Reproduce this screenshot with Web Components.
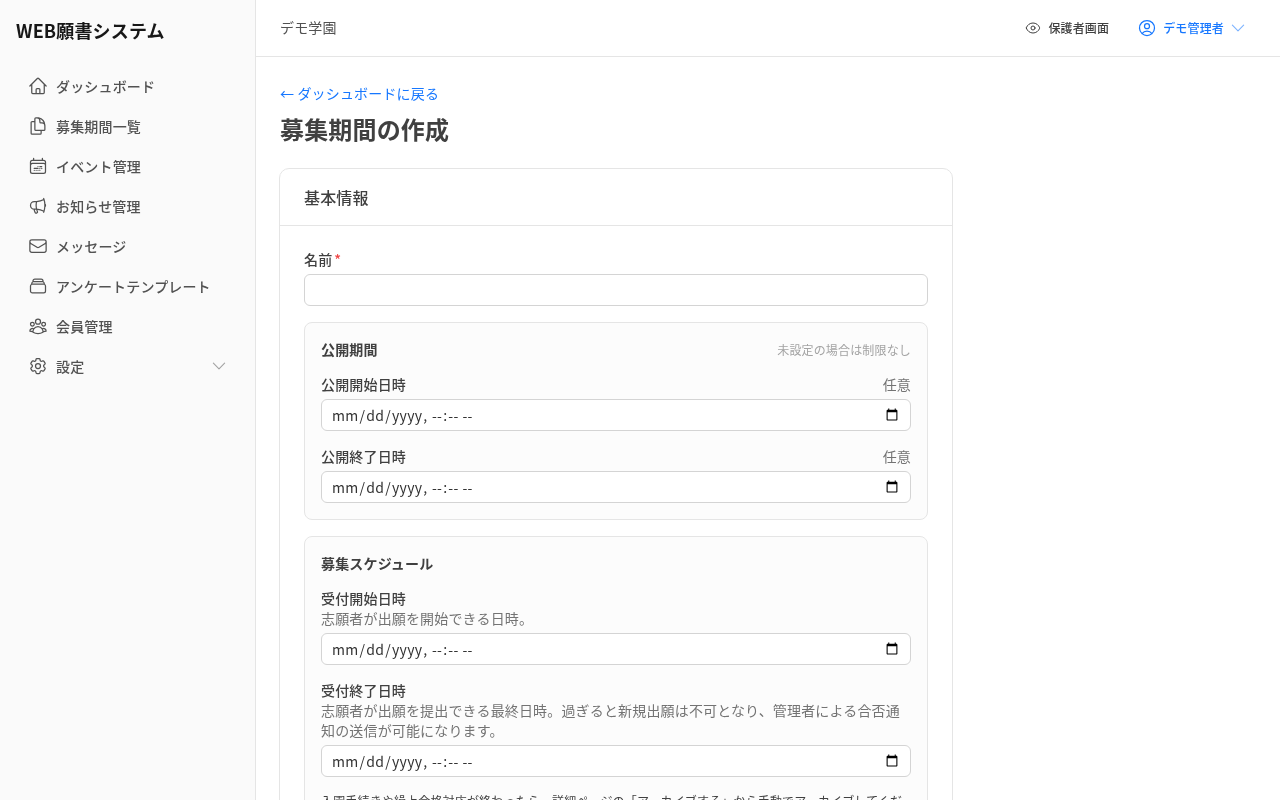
<!DOCTYPE html>
<html lang="ja">
<head>
<meta charset="utf-8">
<title>募集期間の作成</title>
<style>
  html, body {
    margin: 0;
    height: 100%;
    overflow: hidden;
    background: #ffffff;
    font-family: "Noto Sans CJK JP", "Noto Sans", sans-serif;
    letter-spacing: 0.01em;
    color: #404040;
  }
</style>
</head>
<body>

<app-shell>
  <side-nav slot="side" title="WEB願書システム">
    <nav-item icon="home">ダッシュボード</nav-item>
    <nav-item icon="files">募集期間一覧</nav-item>
    <nav-item icon="event">イベント管理</nav-item>
    <nav-item icon="megaphone">お知らせ管理</nav-item>
    <nav-item icon="mail">メッセージ</nav-item>
    <nav-item icon="template">アンケートテンプレート</nav-item>
    <nav-item icon="team">会員管理</nav-item>
    <nav-item icon="gear" expandable>設定</nav-item>
  </side-nav>
  <top-bar slot="top" school="デモ学園" guardian="保護者画面" user="デモ管理者"></top-bar>

  <page-title back="ダッシュボードに戻る">募集期間の作成</page-title>
  <form-card heading="基本情報">
    <text-field label="名前" required></text-field>
    <field-panel heading="公開期間" hint="未設定の場合は制限なし">
      <date-field label="公開開始日時" optional></date-field>
      <date-field label="公開終了日時" optional></date-field>
    </field-panel>
    <field-panel heading="募集スケジュール">
      <date-field label="受付開始日時" help="志願者が出願を開始できる日時。"></date-field>
      <date-field label="受付終了日時" help="志願者が出願を提出できる最終日時。過ぎると新規出願は不可となり、管理者による合否通知の送信が可能になります。"></date-field>
      <panel-note>入園手続きや繰上合格対応が終わったら、詳細ページの「アーカイブする」から手動でアーカイブしてください。</panel-note>
    </field-panel>
  </form-card>
</app-shell>

<script>
(function() {
  // Outline icons, all on a 24 unit grid
  const ICONS = {
    home: 'm2.25 12 8.954-8.955c.44-.439 1.152-.439 1.591 0L21.75 12M4.5 9.75v10.125c0 .621.504 1.125 1.125 1.125H9.75v-4.875c0-.621.504-1.125 1.125-1.125h2.25c.621 0 1.125.504 1.125 1.125V21h4.125c.621 0 1.125-.504 1.125-1.125V9.75M8.25 21h8.25',
    files: 'M15.75 17.25v3.375c0 .621-.504 1.125-1.125 1.125h-9.75a1.125 1.125 0 0 1-1.125-1.125V7.875c0-.621.504-1.125 1.125-1.125H6.75a9.06 9.06 0 0 1 1.5.124m7.5 10.376h3.375c.621 0 1.125-.504 1.125-1.125V11.25c0-4.46-3.243-8.161-7.5-8.876a9.06 9.06 0 0 0-1.5-.124H9.375c-.621 0-1.125.504-1.125 1.125v3.5m7.5 10.375H9.375a1.125 1.125 0 0 1-1.125-1.125v-9.25m12 6.625v-1.875a3.375 3.375 0 0 0-3.375-3.375h-1.5a1.125 1.125 0 0 1-1.125-1.125v-1.5a3.375 3.375 0 0 0-3.375-3.375H9.75',
    event: 'M6.75 2.994v2.25m10.5-2.25v2.25m-14.252 13.5V7.491a2.25 2.25 0 0 1 2.25-2.25h13.5a2.25 2.25 0 0 1 2.25 2.25v11.251m-18 0a2.25 2.25 0 0 0 2.25 2.25h13.5a2.25 2.25 0 0 0 2.25-2.25m-18 0v-7.5a2.25 2.25 0 0 1 2.25-2.25h13.5a2.25 2.25 0 0 1 2.25 2.25v7.5m-6.75-6h2.25m-9 2.25h4.5m.002-2.25h.005v.006H12v-.006Zm-.001 4.5h.006v.006h-.006v-.005Zm-2.25.001h.005v.006H9.75v-.006Zm-2.25 0h.005v.005h-.006v-.005Zm6.75-2.247h.005v.005h-.005v-.005Zm0 2.247h.006v.006h-.006v-.006Zm2.25-2.248h.006V15H16.5v-.005Z',
    megaphone: 'M10.34 15.84c-.688-.06-1.386-.09-2.09-.09H7.5a4.5 4.5 0 1 1 0-9h.75c.704 0 1.402-.03 2.09-.09m0 9.18c.253.962.584 1.892.985 2.783.247.55.06 1.21-.463 1.511l-.657.38c-.551.318-1.26.117-1.527-.461a20.845 20.845 0 0 1-1.44-4.282m3.102.069a18.03 18.03 0 0 1-.59-4.59c0-1.586.205-3.124.59-4.59m0 9.18a23.848 23.848 0 0 1 8.835 2.535M10.34 6.66a23.847 23.847 0 0 0 8.835-2.535m0 0A23.74 23.74 0 0 0 18.795 3m.38 1.125a23.91 23.91 0 0 1 1.014 5.395m-1.014 8.855c-.118.38-.245.754-.38 1.125m.38-1.125a23.91 23.91 0 0 0 1.014-5.395m0-3.46c.495.413.811 1.035.811 1.73 0 .695-.316 1.317-.811 1.73m0-3.46a24.347 24.347 0 0 1 0 3.46',
    mail: 'M21.75 6.75v10.5a2.25 2.25 0 0 1-2.25 2.25h-15a2.25 2.25 0 0 1-2.25-2.25V6.75m19.5 0A2.25 2.25 0 0 0 19.5 4.5h-15a2.25 2.25 0 0 0-2.25 2.25m19.5 0v.243a2.25 2.25 0 0 1-1.07 1.916l-7.5 4.615a2.25 2.25 0 0 1-2.36 0L3.32 8.91a2.25 2.25 0 0 1-1.07-1.916V6.75',
    template: 'M6 6.878V6a2.25 2.25 0 0 1 2.25-2.25h7.5A2.25 2.25 0 0 1 18 6v.878m-12 0c.235-.083.487-.128.75-.128h10.5c.263 0 .515.045.75.128m-12 0A2.25 2.25 0 0 0 4.5 9v.878m13.5-3A2.25 2.25 0 0 1 19.5 9v.878m0 0a2.246 2.246 0 0 0-.75-.128H5.25c-.263 0-.515.045-.75.128m15 0A2.25 2.25 0 0 1 21 12v6a2.25 2.25 0 0 1-2.25 2.25H5.25A2.25 2.25 0 0 1 3 18v-6c0-.98.626-1.813 1.5-2.122',
    team: 'M18 18.72a9.094 9.094 0 0 0 3.741-.479 3 3 0 0 0-4.682-2.72m.94 3.198.001.031c0 .225-.012.447-.037.666A11.944 11.944 0 0 1 12 21c-2.17 0-4.207-.576-5.963-1.584A6.062 6.062 0 0 1 6 18.719m12 0a5.971 5.971 0 0 0-.941-3.197m0 0A5.995 5.995 0 0 0 12 12.75a5.995 5.995 0 0 0-5.058 2.772m0 0a3 3 0 0 0-4.681 2.72 8.986 8.986 0 0 0 3.74.477m.94-3.197a5.971 5.971 0 0 0-.94 3.197M15 6.75a3 3 0 1 1-6 0 3 3 0 0 1 6 0Zm6 3a2.25 2.25 0 1 1-4.5 0 2.25 2.25 0 0 1 4.5 0Zm-13.5 0a2.25 2.25 0 1 1-4.5 0 2.25 2.25 0 0 1 4.5 0Z',
    gear: 'M9.594 3.94c.09-.542.56-.94 1.11-.94h2.593c.55 0 1.02.398 1.11.94l.213 1.281c.063.374.313.686.645.87.074.04.147.083.22.127.325.196.72.257 1.075.124l1.217-.456a1.125 1.125 0 0 1 1.37.49l1.296 2.247a1.125 1.125 0 0 1-.26 1.431l-1.003.827c-.293.241-.438.613-.43.992a7.723 7.723 0 0 1 0 .255c-.008.378.137.75.43.991l1.004.827c.424.35.534.955.26 1.43l-1.298 2.247a1.125 1.125 0 0 1-1.369.491l-1.217-.456c-.355-.133-.75-.072-1.076.124a6.47 6.47 0 0 1-.22.128c-.331.183-.581.495-.644.869l-.213 1.281c-.09.543-.56.94-1.11.94h-2.594c-.55 0-1.019-.398-1.11-.94l-.213-1.281c-.062-.374-.312-.686-.644-.87a6.52 6.52 0 0 1-.22-.127c-.325-.196-.72-.257-1.076-.124l-1.217.456a1.125 1.125 0 0 1-1.369-.49l-1.297-2.247a1.125 1.125 0 0 1 .26-1.431l1.004-.827c.292-.24.437-.613.43-.991a6.932 6.932 0 0 1 0-.255c.007-.38-.138-.751-.43-.992l-1.004-.827a1.125 1.125 0 0 1-.26-1.43l1.297-2.247a1.125 1.125 0 0 1 1.37-.491l1.216.456c.356.133.751.072 1.076-.124.072-.044.146-.086.22-.128.332-.183.582-.495.644-.869l.214-1.28ZM15 12a3 3 0 1 1-6 0 3 3 0 0 1 6 0Z',
    eye: 'M2.036 12.322a1.012 1.012 0 0 1 0-.639C3.423 7.51 7.36 4.5 12 4.5c4.638 0 8.573 3.007 9.963 7.178.07.207.07.431 0 .639C20.577 16.49 16.64 19.5 12 19.5c-4.638 0-8.573-3.007-9.963-7.178ZM15 12a3 3 0 1 1-6 0 3 3 0 0 1 6 0Z',
    user: 'M17.982 18.725A7.488 7.488 0 0 0 12 15.75a7.488 7.488 0 0 0-5.982 2.975m11.963 0a9 9 0 1 0-11.963 0m11.963 0A8.966 8.966 0 0 1 12 21a8.966 8.966 0 0 1-5.982-2.275M15 9.75a3 3 0 1 1-6 0 3 3 0 0 1 6 0Z',
    chevron: 'm19.5 8.25-7.5 7.5-7.5-7.5'
  };

  function iconSvg(name, size) {
    return `<svg xmlns="http://www.w3.org/2000/svg" width="${size}" height="${size}" viewBox="0 0 24 24" fill="none" stroke="currentColor" stroke-width="1.5" stroke-linecap="round" stroke-linejoin="round" aria-hidden="true"><path d="${ICONS[name]}"/></svg>`;
  }

  // Base class: fills an open shadow root from a markup string
  class ShadowElement extends HTMLElement {
    constructor() {
      super();
      this.attachShadow({mode: 'open'});
    }
    render(html) {
      this.shadowRoot.innerHTML = html;
    }
  }

  class AppShell extends ShadowElement {
    connectedCallback() {
      this.render(`
        <style>
          /* own layer without a known opaque background: text gets grey antialiasing as in the design */
          :host { display: grid; grid-template-columns: 256px 1fr; grid-template-rows: 57px 1fr; height: 100vh; overflow: hidden; will-change: transform; }
          .side { grid-row: 1 / 3; display: block; min-height: 0; }
          .main { padding: 24px 24px 24px 23px; overflow-y: auto; scrollbar-width: none; min-height: 0; }
        </style>
        <div class="side"><slot name="side"></slot></div>
        <slot name="top"></slot>
        <div class="main"><slot></slot></div>`);
    }
  }

  class SideNav extends ShadowElement {
    connectedCallback() {
      this.render(`
        <style>
          :host { display: flex; flex-direction: column; height: 100%; box-sizing: border-box; background: #fafafa; border-right: 1px solid #e5e5e5; }
          .brand { padding: 15px 16px 0; font-size: 18px; font-weight: 700; line-height: 30px; color: #171717; }
          nav { display: flex; flex-direction: column; padding: 21px 16px 0; }
        </style>
        <div class="brand">${this.getAttribute('title')}</div>
        <nav><slot></slot></nav>`);
    }
  }

  class NavItem extends ShadowElement {
    connectedCallback() {
      const chevron = this.hasAttribute('expandable')
        ? `<span class="chevron">${iconSvg('chevron', 18)}</span>` : '';
      this.render(`
        <style>
          :host { display: flex; align-items: center; gap: 8px; height: 40px; padding: 0 11px 0 12px; font-size: 14px; font-weight: 500; color: #525252; }
          .icon { display: flex; flex: none; color: #525252; }
          .label { flex: 1; padding-bottom: 1px; }
          .chevron { display: flex; color: #a3a3a3; }
        </style>
        <span class="icon">${iconSvg(this.getAttribute('icon'), 20)}</span>
        <span class="label"><slot></slot></span>
        ${chevron}`);
    }
  }

  class TopBar extends ShadowElement {
    connectedCallback() {
      this.render(`
        <style>
          :host { display: flex; align-items: center; justify-content: space-between; box-sizing: border-box; height: 57px; padding: 0 33px 0 24px; background: #fff; border-bottom: 1px solid #e5e5e5; }
          .school { padding-bottom: 2px; font-size: 14px; color: #525252; }
          .actions { display: flex; align-items: center; gap: 28px; font-size: 12px; }
          .action { display: flex; align-items: center; gap: 7px; color: #404040; font-weight: 500; }
          .action span { padding-bottom: 2px; }
          .user { gap: 6px; color: #1677ff; }
          .action .chevron { display: flex; padding: 0; margin-left: -1px; color: #7db3ff; }
        </style>
        <div class="school">${this.getAttribute('school')}</div>
        <div class="actions">
          <div class="action">${iconSvg('eye', 16)}<span>${this.getAttribute('guardian')}</span></div>
          <div class="action user">${iconSvg('user', 20)}<span>${this.getAttribute('user')}</span>
            <span class="chevron">${iconSvg('chevron', 18)}</span></div>
        </div>`);
    }
  }

  class PageTitle extends ShadowElement {
    connectedCallback() {
      this.render(`
        <style>
          :host { display: block; margin: 0 0 21px 1px; }
          a { display: block; font-size: 14px; line-height: 25px; color: #1677ff; text-decoration: none; }
          h1 { margin: 5px 0 0; font-size: 24px; font-weight: 700; line-height: 36px; color: #404040; }
        </style>
        <a href="#">← ${this.getAttribute('back')}</a>
        <h1><slot></slot></h1>`);
    }
  }

  class FormCard extends ShadowElement {
    connectedCallback() {
      this.render(`
        <style>
          :host { display: block; box-sizing: border-box; width: 674px; background: #fff; border: 1px solid #e5e5e5; border-radius: 10px; }
          header { padding: 16px 24px; font-size: 16px; font-weight: 500; line-height: 24px; color: #404040; border-bottom: 1px solid #e5e5e5; }
          .body { display: flex; flex-direction: column; gap: 16px; padding: 24px; }
        </style>
        <header>${this.getAttribute('heading')}</header>
        <div class="body"><slot></slot></div>`);
    }
  }

  class TextField extends ShadowElement {
    connectedCallback() {
      const star = this.hasAttribute('required') ? '<span class="star">*</span>' : '';
      this.render(`
        <style>
          :host { display: block; }
          label { display: block; margin: -1px 0 5px; font-size: 14px; line-height: 20px; font-weight: 500; color: #404040; }
          .star { margin-left: 2px; color: #ef4444; }
          input { display: block; box-sizing: border-box; width: 100%; height: 32px; padding: 0 9px; border: 1px solid #d4d4d4; border-radius: 6px; background: #fff; outline: none; font: inherit; font-size: 14px; }
        </style>
        <label>${this.getAttribute('label')}${star}</label>
        <input type="text">`);
    }
  }

  class DateField extends ShadowElement {
    connectedCallback() {
      const optional = this.hasAttribute('optional') ? '<span class="opt">任意</span>' : '';
      const help = this.hasAttribute('help') ? `<div class="help">${this.getAttribute('help')}</div>` : '';
      this.render(`
        <style>
          :host { display: block; }
          .row { display: flex; justify-content: space-between; margin-top: -1px; font-size: 14px; line-height: 20px; }
          label { font-weight: 500; color: #404040; }
          .opt { color: #737373; }
          .help { font-size: 14px; line-height: 20px; color: #737373; }
          input { display: block; box-sizing: border-box; width: 100%; height: 32px; margin-top: 5px; padding: 0 9px; border: 1px solid #d4d4d4; border-radius: 6px; background: #fff; outline: none; font: inherit; font-size: 14px; letter-spacing: 0.02em; color: #333333; }
        </style>
        <div class="row"><label>${this.getAttribute('label')}</label>${optional}</div>
        ${help}
        <input type="datetime-local">`);
    }
  }

  class FieldPanel extends ShadowElement {
    connectedCallback() {
      const hint = this.hasAttribute('hint') ? `<span class="hint">${this.getAttribute('hint')}</span>` : '';
      this.render(`
        <style>
          :host { display: block; padding: 16px; background: #fcfcfc; border: 1px solid #e5e5e5; border-radius: 8px; }
          .head { display: flex; align-items: center; justify-content: space-between; height: 22px; margin-bottom: 14px; }
          .head span { padding-bottom: 2px; }
          .title { font-size: 14px; font-weight: 700; color: #404040; }
          .hint { font-size: 12px; color: #a3a3a3; }
          .fields { display: flex; flex-direction: column; gap: 16px; }
        </style>
        <div class="head"><span class="title">${this.getAttribute('heading')}</span>${hint}</div>
        <div class="fields"><slot></slot></div>`);
    }
  }

  class PanelNote extends ShadowElement {
    connectedCallback() {
      this.render(`
        <style>
          :host { display: block; font-size: 12px; line-height: 16px; color: #404040; }
        </style>
        <slot></slot>`);
    }
  }

  customElements.define('app-shell', AppShell);
  customElements.define('side-nav', SideNav);
  customElements.define('nav-item', NavItem);
  customElements.define('top-bar', TopBar);
  customElements.define('page-title', PageTitle);
  customElements.define('form-card', FormCard);
  customElements.define('text-field', TextField);
  customElements.define('date-field', DateField);
  customElements.define('field-panel', FieldPanel);
  customElements.define('panel-note', PanelNote);
})();
</script>
</body>
</html>
